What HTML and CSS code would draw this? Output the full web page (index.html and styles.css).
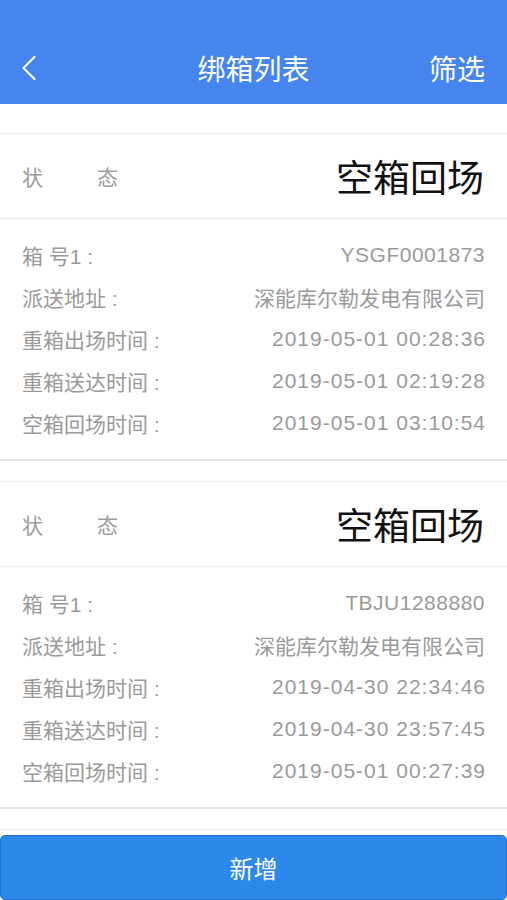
FILE: index.html
```html
<!DOCTYPE html>
<html lang="zh-CN">
<head>
  <meta charset="UTF-8">
  <meta name="viewport" content="width=device-width, initial-scale=1.0">
  <title>绑箱列表</title>
  <link rel="stylesheet" href="styles.css">
</head>
<body>
  <div id="header">
    <div class="nav">
      <span class="back">
        <svg width="14" height="24" viewBox="0 0 14 24"><path d="M12.5 1 L1.5 12 L12.5 23" fill="none" stroke="#fff" stroke-width="2" stroke-linecap="round" stroke-linejoin="round"/></svg>
      </span>
      <span class="title">绑箱列表</span>
      <span class="filter">筛选</span>
    </div>
  </div>

  <div id="list">
    <!-- 第一条 -->
    <div class="card">
      <div class="status-row">
        <span class="status-label"><span>状</span><span>态</span></span>
        <span class="status-value">空箱回场</span>
      </div>
      <div class="details">
        <div class="row"><span>箱 号1 :</span><span class="code">YSGF0001873</span></div>
        <div class="row"><span>派送地址 :</span><span>深能库尔勒发电有限公司</span></div>
        <div class="row"><span>重箱出场时间 :</span><span class="num">2019-05-01 00:28:36</span></div>
        <div class="row"><span>重箱送达时间 :</span><span class="num">2019-05-01 02:19:28</span></div>
        <div class="row"><span>空箱回场时间 :</span><span class="num">2019-05-01 03:10:54</span></div>
      </div>
    </div>
    <!-- 第二条 -->
    <div class="card">
      <div class="status-row">
        <span class="status-label"><span>状</span><span>态</span></span>
        <span class="status-value">空箱回场</span>
      </div>
      <div class="details">
        <div class="row"><span>箱 号1 :</span><span class="code">TBJU1288880</span></div>
        <div class="row"><span>派送地址 :</span><span>深能库尔勒发电有限公司</span></div>
        <div class="row"><span>重箱出场时间 :</span><span class="num">2019-04-30 22:34:46</span></div>
        <div class="row"><span>重箱送达时间 :</span><span class="num">2019-04-30 23:57:45</span></div>
        <div class="row"><span>空箱回场时间 :</span><span class="num">2019-05-01 00:27:39</span></div>
      </div>
    </div>
    <!-- 第三条 (被按钮遮住) -->
    <div class="card card-peek"></div>
  </div>

  <button id="addBtn">新增</button>
</body>
</html>
```

FILE: styles.css
```css
* { box-sizing: border-box; margin: 0; padding: 0; }
html, body { width: 100%; height: 100%; }
body {
  display: flex; flex-direction: column; overflow: hidden;
  font-family: "Liberation Sans", "Noto Sans CJK SC", sans-serif;
  background: #fff;
}
/* 顶部导航 */
#header { background: #4785ee; height: 104px; padding-top: 36px; flex-shrink: 0; }
.nav {
  height: 64px; display: flex; align-items: center; justify-content: space-between;
  padding: 0 22px; color: #fff;
}
.back { display: flex; align-items: center; width: 60px; }
.title { font-size: 28px; }
.filter { font-size: 28px; width: 60px; text-align: right; }
/* 列表 */
#list { flex: 1; overflow: hidden; padding-top: 29px; }
.card {
  border-top: 1px solid #ededed; border-bottom: 2px solid #e6e6e6;
  margin-bottom: 20px;
}
.card-peek { height: 40px; border-bottom: none; }
.status-row {
  height: 85px; display: flex; align-items: center; justify-content: space-between;
  padding: 0 23px 0 22px; border-bottom: 1px solid #ececec;
}
.status-label {
  display: flex; justify-content: space-between; width: 96px;
  font-size: 21px; color: #9d9d9d;
}
.status-value { font-size: 37px; color: #111; }
.details { padding: 15px 22px 15px 0; margin-left: 22px; }
.row {
  height: 42px; display: flex; align-items: center; justify-content: space-between;
  font-size: 21px; color: #9a9a9a;
}
.row .num { letter-spacing: 1px; margin-right: -1px; }
.row .code { letter-spacing: 0.5px; }
/* 底部按钮 */
#addBtn {
  flex-shrink: 0; height: 65px; width: 100%;
  background: #2d88eb; border: 1px solid #2670c9; border-radius: 5px;
  color: #fff; font-size: 24px; font-family: inherit;
}
```
